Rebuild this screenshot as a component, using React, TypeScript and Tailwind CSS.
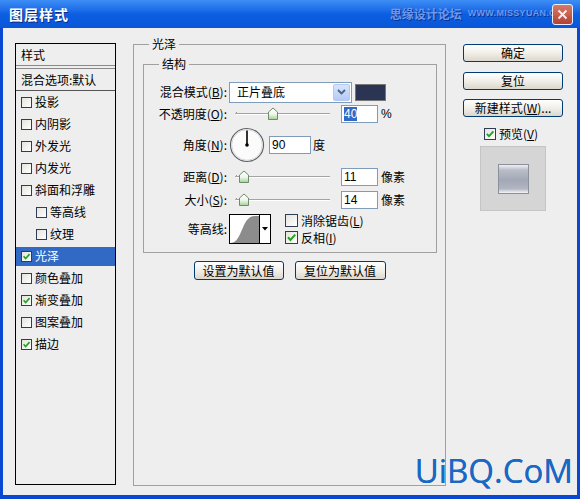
import React from 'react';

const font = "font-['Noto_Sans_CJK_SC','Noto_Sans',sans-serif]";
const btnCls = 'flex items-center justify-center border border-[#003c74] rounded-[3px] bg-linear-to-b from-white via-[#f1efe9] to-[#dcd7cc] text-[12px] leading-[14px] text-black';
const inputCls = 'flex items-center bg-white border border-[#7f9db9] pl-[2px] text-[12px] font-[\'Liberation_Sans\',sans-serif] text-black';

const rows = [
  { label: '投影' },
  { label: '内阴影' },
  { label: '外发光' },
  { label: '内发光' },
  { label: '斜面和浮雕' },
  { label: '等高线', indent: true },
  { label: '纹理', indent: true },
  { label: '光泽', checked: true, selected: true },
  { label: '颜色叠加' },
  { label: '渐变叠加', checked: true },
  { label: '图案叠加' },
  { label: '描边', checked: true },
];

function Check({ checked, size = 12 }: { checked?: boolean; size?: number }) {
  return (
    <span
      className="shrink-0 flex items-center justify-center border border-[#2c3d55] bg-linear-to-br from-[#e4e3dc] to-white"
      style={{ width: size, height: size }}
    >
      {checked && (
        <svg width={size - 2} height={size - 2} viewBox="0 0 10 10">
          <path d="M1.8 4.8 L4 7.2 L8.4 2.4" fill="none" stroke="#21a121" strokeWidth="1.8" />
        </svg>
      )}
    </span>
  );
}

function Slider({ pos }: { pos: number }) {
  return (
    <svg width="97" height="14" viewBox="0 0 97 14" className="shrink-0">
      <path d="M4 5 Q1 6.5 4 8" fill="none" stroke="#9a9a9a" />
      <line x1="3" y1="6.5" x2="97" y2="6.5" stroke="#a3a3a3" />
      <line x1="3" y1="7.5" x2="97" y2="7.5" stroke="#ffffff" />
      <defs>
        <linearGradient id={`th${pos}`} x1="0" y1="0" x2="0" y2="1">
          <stop offset="0" stopColor="#ffffff" />
          <stop offset="0.55" stopColor="#eef6ea" />
          <stop offset="1" stopColor="#9fd28f" />
        </linearGradient>
      </defs>
      <path
        d={`M${pos - 4.5} 12.5 L${pos - 4.5} 5 L${pos} 1 L${pos + 4.5} 5 L${pos + 4.5} 12.5 Z`}
        fill={`url(#th${pos})`}
        stroke="#6f8a6f"
      />
    </svg>
  );
}

function Dial() {
  return (
    <svg width="36" height="36" viewBox="0 0 36 36" className="shrink-0">
      <circle cx="18" cy="18" r="16.5" fill="#fbfbfb" stroke="#5f6368" strokeWidth="1.2" />
      <circle cx="18" cy="18" r="15.3" fill="none" stroke="#d8d8d8" strokeWidth="1" />
      <line x1="18" y1="18" x2="18" y2="3.5" stroke="#000" strokeWidth="1.6" />
      <circle cx="18" cy="18" r="1.8" fill="#000" />
    </svg>
  );
}

function Contour() {
  return (
    <div className="shrink-0 w-[42px] h-[30px] border border-black bg-white flex">
      <svg width="29" height="28" viewBox="0 0 29 28">
        <path d="M1 28 C 13 27, 11 1, 25 1 L29 1 L29 28 Z" fill="#8c8c8c" />
      </svg>
      <div className="w-[11px] h-full border-l border-black flex items-center justify-center">
        <svg width="6" height="4" viewBox="0 0 6 4"><path d="M0 0 H6 L3 3.5 Z" fill="#000" /></svg>
      </div>
    </div>
  );
}

function Row({ label, h, mt, children }: { label: React.ReactNode; h: number; mt: number; children: React.ReactNode }) {
  return (
    <div className="flex items-center" style={{ height: h, marginTop: mt }}>
      <div className="w-[83px] shrink-0 text-right text-[12px] leading-[16px] whitespace-nowrap">{label}</div>
      {children}
    </div>
  );
}

export default function App() {
  return (
    <div className={`${font} w-[580px] h-[499px] bg-[#0a48d2] flex flex-col overflow-hidden text-black`}>
      {/* title bar */}
      <div className="h-[28px] shrink-0 flex items-center pl-[9px] pr-[7px] bg-linear-to-b from-[#3e8ef6] via-[#0c5fe2] to-[#0a55d8]">
        <span className="text-white font-bold text-[14px] leading-[18px] tracking-[1px] [text-shadow:1px_1px_0_#0b2c86]">图层样式</span>
        <div className="ml-auto flex items-center gap-[6px] text-[#6f98ec] [text-shadow:1px_1px_0_#0a3592]">
          <span className="text-[12px] font-bold leading-[16px]">思缘设计论坛</span>
          <span className="font-['Liberation_Sans',sans-serif] text-[9px] font-bold tracking-[0.3px]">WWW.MISSYUAN.COM</span>
        </div>
        <div className="-ml-[19px] w-[21px] h-[21px] rounded-[3px] border border-white bg-linear-to-b from-[#e8795a] to-[#c8401f] flex items-center justify-center opacity-90">
          <svg width="11" height="11" viewBox="0 0 11 11"><path d="M1.5 1.5 L9.5 9.5 M9.5 1.5 L1.5 9.5" stroke="#fff" strokeWidth="2" /></svg>
        </div>
      </div>

      {/* body */}
      <div className="relative flex-1 mx-[3px] mb-[4px] bg-[#eeeeee] flex items-start pt-[8px] pl-[12px]">
        {/* style list */}
        <div className="mt-[7px] w-[101px] h-[442px] shrink-0 border border-black flex flex-col text-[12px] leading-[16px]">
          <div className="h-[21px] flex items-center pl-[5px]">样式</div>
          <div className="h-[4px] border-t border-b border-[#8a8a8a]" />
          <div className="h-[22px] flex items-center pl-[5px] border-b border-[#555]">混合选项:默认</div>
          {rows.map((r) => (
            <div key={r.label} className="h-[22px] flex items-center">
              <div
                className={`w-full h-[19px] flex items-center gap-[3px] ${r.indent ? 'pl-[20px]' : 'pl-[5px]'} ${r.selected ? 'bg-[#316ac5] text-white' : ''}`}
              >
                <Check checked={r.checked} size={11} />
                <span>{r.label}</span>
              </div>
            </div>
          ))}
        </div>

        {/* 光泽 group */}
        <fieldset className="ml-[17px] w-[313px] h-[450px] shrink-0 border border-[#a0a0a0]">
          <legend className="ml-[15px] px-[3px] text-[12px] leading-[16px]">光泽</legend>
          <fieldset className="mt-[4px] ml-[9px] w-[294px] border border-[#a0a0a0] pb-[7px]">
            <legend className="ml-[15px] px-[3px] text-[12px] leading-[16px]">结构</legend>
            <div className="pt-[9px]">
              <Row label={<>混合模式(<u>B</u>):</>} h={22} mt={0}>
                <div className="ml-[2px] w-[123px] h-[21px] border border-[#7f9db9] bg-white flex items-center justify-between pl-[7px] pr-[1px]">
                  <span className="text-[12px] leading-[16px]">正片叠底</span>
                  <div className="w-[17px] h-[17px] rounded-[2px] border border-[#b3c8f3] bg-linear-to-b from-[#d8e4fc] to-[#b4cbf7] flex items-center justify-center">
                    <svg width="9" height="6" viewBox="0 0 9 6"><path d="M1 1 L4.5 4.5 L8 1" fill="none" stroke="#4d6185" strokeWidth="1.8" /></svg>
                  </div>
                </div>
                <div className="ml-[3px] w-[31px] h-[17px] border border-[#777] bg-[#2b3452]" />
              </Row>
              <Row label={<>不透明度(<u>O</u>):</>} h={21} mt={0}>
                <div className="ml-[6px]"><Slider pos={40} /></div>
                <div className={`${inputCls} ml-[11px] w-[37px] h-[18px]`}>
                  <span className="bg-[#316ac5] text-white leading-[14px]">40</span>
                </div>
                <span className="ml-[3px] text-[12px] font-['Liberation_Sans',sans-serif]">%</span>
              </Row>
              <Row label={<>角度(<u>N</u>):</>} h={38} mt={2}>
                <div className="ml-[2px]"><Dial /></div>
                <div className={`${inputCls} ml-[4px] w-[42px] h-[18px]`}>90</div>
                <span className="ml-[2px] text-[12px]">度</span>
              </Row>
              <Row label={<>距离(<u>D</u>):</>} h={20} mt={3}>
                <div className="ml-[6px]"><Slider pos={11} /></div>
                <div className={`${inputCls} ml-[11px] w-[37px] h-[18px]`}>11</div>
                <span className="ml-[3px] text-[12px]">像素</span>
              </Row>
              <Row label={<>大小(<u>S</u>):</>} h={20} mt={3}>
                <div className="ml-[6px]"><Slider pos={11} /></div>
                <div className={`${inputCls} ml-[11px] w-[37px] h-[18px]`}>14</div>
                <span className="ml-[3px] text-[12px]">像素</span>
              </Row>
              <Row label="等高线:" h={32} mt={3}>
                <div className="ml-[2px]"><Contour /></div>
                <div className="ml-[14px] flex flex-col gap-[4px] text-[12px] leading-[13px]">
                  <div className="flex items-center gap-[3px]"><Check size={13} /><span>消除锯齿(<u>L</u>)</span></div>
                  <div className="flex items-center gap-[3px]"><Check size={13} checked /><span>反相(<u>I</u>)</span></div>
                </div>
              </Row>
            </div>
          </fieldset>
          <div className="mt-[8px] flex justify-center gap-[11px]">
            <div className={`${btnCls} w-[90px] h-[19px]`}>设置为默认值</div>
            <div className={`${btnCls} w-[91px] h-[19px]`}>复位为默认值</div>
          </div>
        </fieldset>

        {/* right column */}
        <div className="ml-[17px] mt-[8px] w-[100px] shrink-0 flex flex-col">
          <div className={`${btnCls} h-[18px]`}>确定</div>
          <div className={`${btnCls} h-[18px] mt-[10px]`}>复位</div>
          <div className={`${btnCls} h-[18px] mt-[9px]`}>新建样式(<u>W</u>)...</div>
          <div className="mt-[9px] h-[16px] flex items-center pl-[21px] gap-[3px] text-[12px] leading-[16px]">
            <Check size={12} checked />
            <span>预览(<u>V</u>)</span>
          </div>
          <div className="mt-[4px] ml-[17px] w-[66px] h-[65px] border border-[#c4c4c4] bg-[#d5d5d5] flex items-center justify-center">
            <div className="w-[31px] h-[30px] border border-[#8c909a] bg-[linear-gradient(to_bottom,#eef0f3_0%,#b9bdc8_18%,#a3a8b6_55%,#b2b6c2_85%,#f4f5f7_100%)]" />
          </div>
        </div>

        {/* watermark */}
        <div className="absolute right-[4px] bottom-[6px] font-['Open_Sans',sans-serif] text-[33px] leading-[36px] text-[#1a68c4] [text-shadow:0_0_0.6px_#1a68c4]">
          UiBQ.CoM
        </div>
      </div>
    </div>
  );
}
